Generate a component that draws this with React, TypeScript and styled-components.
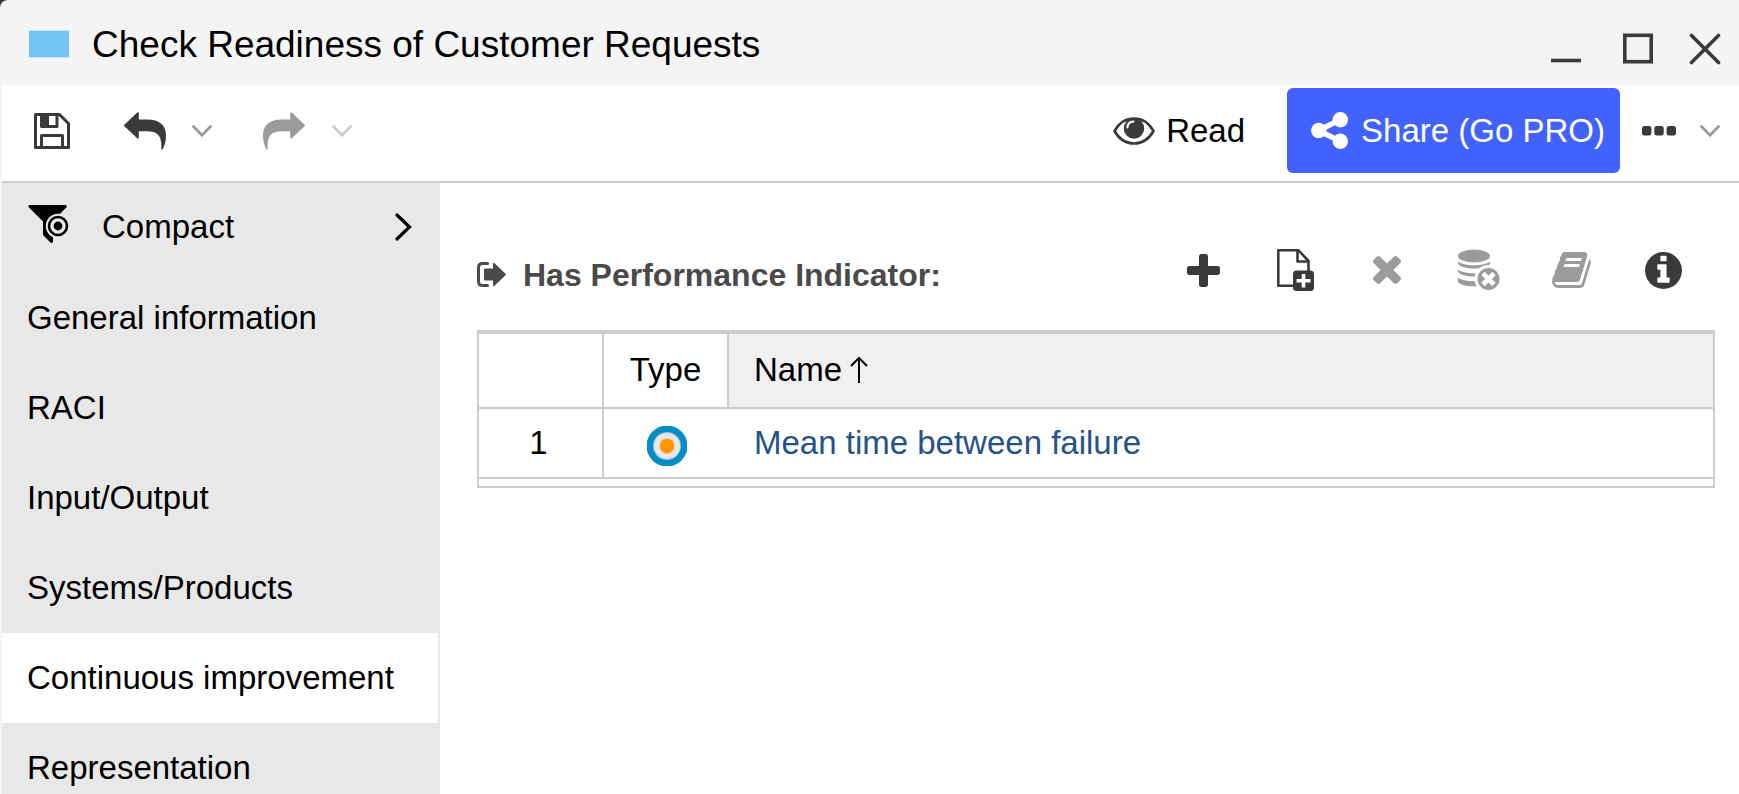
import React from 'react';
import styled, { createGlobalStyle } from 'styled-components';

const GlobalStyle = createGlobalStyle`
  *, *::before, *::after { box-sizing: border-box; }
  html, body, #root { height: 100%; }
  body {
    margin: 0;
    overflow: hidden;
    background: #3a3a3a;
    color: #000;
    font-family: "Liberation Sans", Arial, Helvetica, sans-serif;
    font-size: 33px;
    line-height: 40px;
  }
  button {
    margin: 0;
    padding: 0;
    border: 0;
    background: none;
    color: inherit;
    font: inherit;
    cursor: pointer;
  }
  button:disabled { cursor: default; }
  svg { display: block; flex: none; }
`;

const Window = styled.div`
  display: flex;
  flex-direction: column;
  min-height: 100%;
  padding-left: 2px;
  background: #f4f4f4;
  border-top-left-radius: 8px;
`;

const TitleBar = styled.header`
  display: flex;
  align-items: center;
  height: 85px;
  padding: 2px 18px 0 27px;
`;

const Title = styled.h1`
  flex: 1;
  margin: 0 0 0 23px;
  padding-top: 2px;
  font-size: 37px;
  line-height: 44px;
  font-weight: 400;
  white-space: nowrap;
`;

const WindowControls = styled.div`
  display: flex;
  gap: 36px;
  padding-top: 10px;
  color: #3a3a3a;
`;

const Toolbar = styled.div`
  display: flex;
  align-items: center;
  height: 98px;
  padding: 0 19px 5px 32px;
  background: #fff;
  border-bottom: 2px solid #ccc;
`;

const ToolButton = styled.button<{ $tone?: string; $gap?: number }>`
  display: flex;
  align-items: center;
  margin-left: ${({ $gap = 0 }) => $gap}px;
  color: ${({ $tone = '#3a3a3a' }) => $tone};
`;

const Spacer = styled.div`
  flex: 1;
`;

const ReadButton = styled.button`
  display: flex;
  align-items: center;
  gap: 11px;
  margin-right: 42px;
`;

const ShareButton = styled.button`
  display: flex;
  align-items: center;
  gap: 13px;
  height: 85px;
  padding: 0 15px 0 24px;
  border-radius: 6px;
  background: #4262ff;
  color: #fff;
  white-space: nowrap;
`;

const Body = styled.div`
  display: flex;
  flex: 1;
  min-height: 0;
`;

const Sidebar = styled.nav`
  width: 438px;
  flex: none;
  background: #e8e8e8;
`;

const SidebarItem = styled.button<{ $active?: boolean }>`
  display: flex;
  align-items: center;
  width: 100%;
  height: 90px;
  padding: 0 26px 0 25px;
  border-right: 2px solid #e8e8e8;
  background: ${({ $active }) => ($active ? '#fff' : 'transparent')};
  text-align: left;
  white-space: nowrap;
`;

const ViewItem = styled(SidebarItem)`
  padding: 0 26px 2px;
  svg:first-child { margin-bottom: 6px; }
`;

const CompactLabel = styled.span`
  flex: 1;
  margin-left: 33px;
`;

const Content = styled.main`
  flex: 1;
  min-width: 0;
  padding: 57px 24px 0 37px;
  background: #fff;
`;

const SectionHeader = styled.div`
  display: flex;
  align-items: center;
  height: 60px;
  margin-bottom: 30px;
`;

const SectionTitle = styled.h2`
  display: flex;
  flex: 1;
  align-items: center;
  gap: 16px;
  margin: 0;
  padding-top: 9px;
  color: #4a4a4a;
  font-size: 32px;
  line-height: 40px;
  font-weight: 700;
  white-space: nowrap;
`;

const Actions = styled.div`
  display: flex;
  padding-right: 6px;
`;

const ActionButton = styled.button`
  display: flex;
  align-items: center;
  justify-content: center;
  width: 92px;
  height: 60px;
  color: #3a3a3a;
  &:disabled { color: #9b9b9b; }
`;

const Grid = styled.div`
  padding-bottom: 7px;
  border: 2px solid #ccc;
  border-top-width: 4px;
`;

const Table = styled.table`
  width: 100%;
  border-collapse: separate;
  border-spacing: 0;
  table-layout: fixed;
`;

const HeadCell = styled.th<{ $sorted?: boolean; $width?: number }>`
  ${({ $width }) => $width && `width: ${$width}px;`}
  height: 75px;
  padding: ${({ $sorted }) => ($sorted ? '0 25px 2px' : '0 0 2px')};
  border-bottom: 2px solid #ccc;
  border-right: ${({ $sorted }) => ($sorted ? '0' : '2px solid #ccc')};
  background: ${({ $sorted }) => ($sorted ? '#f0f0f0' : '#fff')};
  font-weight: 400;
  text-align: ${({ $sorted }) => ($sorted ? 'left' : 'center')};
`;

const SortButton = styled.button`
  display: flex;
  align-items: center;
  gap: 8px;
`;

const Cell = styled.td`
  height: 70px;
  padding: 0 25px;
  border-bottom: 2px solid #ccc;
`;

const NumberCell = styled(Cell)`
  padding: 0 4px 0 0;
  border-right: 2px solid #ccc;
  text-align: center;
`;

const TypeCell = styled(Cell)`
  padding: 6px 0 0;
  svg { margin: 0 auto; }
`;

const NameLink = styled.a`
  color: #255288;
  text-decoration: none;
`;

const FolderIcon = () => (
  <svg width="40" height="28" viewBox="0 0 40 28" aria-hidden="true">
    <rect width="40" height="28" fill="#c3e2f8" />
    <rect y="1" width="40" height="26" fill="#74c3f5" />
  </svg>
);

const SaveIcon = () => (
  <svg width="36" height="36" viewBox="0 0 36 36" fill="none" stroke="currentColor" strokeWidth="3" strokeLinejoin="round" aria-hidden="true">
    <path d="M1.5 1.5H25.5L34.5 10.5V34.5H1.5Z" />
    <path d="M7.5 1.5V13.5H23V1.5" />
    <path d="M8 2H15V13H8Z" fill="currentColor" stroke="none" />
    <path d="M7.5 34V22.5H28.5V34" />
  </svg>
);

const CurvedArrow = ({ flip }: { flip?: boolean }) => (
  <svg width="42" height="38" viewBox="0 0 42 38" fill="currentColor" aria-hidden="true">
    <path
      transform={flip ? 'translate(42 0) scale(-1 1)' : undefined}
      d="M.4 12.8 13.2.4Q14.8-.4 14.8 1.3V7.6H23C36 7.6 42 13.5 42 23.5C42 29 40.8 33.5 38.5 37.5H37.2C38.500 24.5 34 19.3 23 19.3H14.8V25.5Q14.8 27.5 13.2 26.3L.4 14.3Q-.3 13.5.4 12.8Z"
    />
  </svg>
);

const Caret = () => (
  <svg width="20" height="12" viewBox="0 0 20 12" fill="none" stroke="currentColor" strokeWidth="2.8" strokeLinecap="round" aria-hidden="true">
    <path d="M1.5 1.5 10 10.2 18.5 1.5" />
  </svg>
);

const EyeIcon = () => (
  <svg width="42" height="28" viewBox="0 0 42 28" aria-hidden="true">
    <path d="M1.5 14C6 6 13 1.5 21 1.5S36 6 40.5 14C36 22 29 26.500 21 26.5S6 22 1.5 14Z" fill="none" stroke="#3a3a3a" strokeWidth="2.6" strokeLinejoin="round" />
    <circle cx="21" cy="11.5" r="10.2" fill="#3a3a3a" />
    <path d="M14.500 10.5C14.500 7 16.500 4.700 20.500 4.500" fill="none" stroke="#fff" strokeWidth="2" strokeLinecap="round" />
  </svg>
);

const ShareIcon = () => (
  <svg width="37" height="37" viewBox="128 128 1536 1536" fill="currentColor" aria-hidden="true">
    <path d="M1344 1024q133 0 226.5 93.5t93.5 226.5-93.5 226.5-226.5 93.5-226.5-93.5-93.5-226.5q0-12 2-34l-360-180q-92 86-218 86-133 0-226.5-93.5t-93.5-226.5 93.5-226.5 226.5-93.5q126 0 218 86l360-180q-2-22-2-34 0-133 93.5-226.5t226.5-93.5 226.5 93.5 93.5 226.5-93.5 226.5-226.5 93.5q-126 0-218-86l-360 180q2 22 2 34t-2 34l360 180q92-86 218-86z" />
  </svg>
);

const DotsIcon = () => (
  <svg width="34" height="10" viewBox="0 0 34 10" fill="currentColor" aria-hidden="true">
    <rect width="9.400" height="9.400" rx="2.500" />
    <rect x="12.300" width="9.400" height="9.400" rx="2.500" />
    <rect x="24.600" width="9.400" height="9.400" rx="2.500" />
  </svg>
);

const FunnelIcon = () => (
  <svg width="41" height="40" viewBox="0 0 41 40" aria-hidden="true">
    <path d="M1.5 1H37.5Q39.5 2 38.5 3.2L25 17V37.5Q24.5 40 22.5 38.5L15.5 31.5Q15 31 15 30V17.5L.8 3.3Q-.3 1.8 1.5 1Z" />
    <circle cx="30" cy="22" r="12.2" fill="#e8e8e8" />
    <circle cx="30" cy="22" r="9" fill="none" stroke="#000" strokeWidth="2.6" />
    <circle cx="30" cy="22" r="4.4" />
  </svg>
);

const ChevronRight = () => (
  <svg width="17" height="28" viewBox="0 0 17 28" fill="none" stroke="currentColor" strokeWidth="3.2" strokeLinecap="round" aria-hidden="true">
    <path d="M2 2 14.5 14 2 26" />
  </svg>
);

const LinkOutIcon = () => (
  <svg width="30" height="26" viewBox="0 0 30 26" fill="currentColor" aria-hidden="true">
    <path d="M10.500 1.500H5.500Q1.500 1.500 1.500 5.500V19.500Q1.500 23.500 5.500 23.500H10.500" fill="none" stroke="currentColor" strokeWidth="3" strokeLinecap="round" />
    <path d="M8 6.500H16V2Q16 .2 17.500 1.200L28.500 11.700Q29.300 12.500 28.500 13.300L17.500 23.800Q16 24.800 16 23V18.500H8Q7 18.500 7 17.500V7.500Q7 6.500 8 6.500Z" />
  </svg>
);

const PlusIcon = () => (
  <svg width="33" height="33" viewBox="192 128 1408 1408" fill="currentColor" aria-hidden="true">
    <path d="M1600 736v192q0 40-28 68t-68 28h-416v416q0 40-28 68t-68 28h-192q-40 0-68-28t-28-68v-416h-416q-40 0-68-28t-28-68v-192q0-40 28-68t68-28h416v-416q0-40 28-68t68-28h192q40 0 68 28t28 68v416h416q40 0 68 28t28 68z" />
  </svg>
);

const FileAddIcon = () => (
  <svg width="37" height="42" viewBox="0 0 37 42" aria-hidden="true">
    <g fill="none" stroke="currentColor" strokeWidth="2.6" strokeLinejoin="round">
      <path d="M31.500 22V12L21.500 1.300H1.300V36.800H17" />
      <path d="M20.500 1.200V12.500H31.500" />
    </g>
    <rect x="16" y="21.500" width="21" height="20.500" rx="3.500" fill="currentColor" />
    <path d="M26.500 25V38.500M19.500 31.700H33.500" stroke="#fff" strokeWidth="3.6" />
  </svg>
);

const TimesIcon = () => (
  <svg width="28" height="28" viewBox="302 302 1188 1188" fill="currentColor" aria-hidden="true">
    <path d="M1490 1322q0 40-28 68l-136 136q-28 28-68 28t-68-28l-294-294-294 294q-28 28-68 28t-68-28l-136-136q-28-28-28-68t28-68l294-294-294-294q-28-28-28-68t28-68l136-136q28-28 68-28t68 28l294 294 294-294q28-28 68-28t68 28l136 136q28 28 28 68t-28 68l-294 294 294 294q28 28 28 68z" transform="translate(0 -64)" />
  </svg>
);

const DatabaseRemoveIcon = () => (
  <svg width="42" height="42" viewBox="0 0 42 42" aria-hidden="true">
    <g fill="currentColor">
      <ellipse cx="16" cy="7" rx="16" ry="6.500" />
      <path d="M0 12.500C6 17.500 26 17.500 32 12.500V15C28 21 4 21 0 15Z" />
      <path d="M0 20.500C6 25.500 26 25.500 32 20.500V23C28 29 4 29 0 23Z" />
      <path d="M0 28.500C6 33.500 26 33.500 32 28.500V31C28 39 4 39 0 33Z" />
    </g>
    <circle cx="30.500" cy="30" r="14" fill="#fff" />
    <circle cx="30.500" cy="30" r="11" fill="currentColor" />
    <path d="M25 24.500 36 35.500M36 24.500 25 35.500" stroke="#fff" strokeWidth="4.600" />
  </svg>
);

const BookIcon = () => (
  <svg width="39" height="36" viewBox="60 128 1670 1536" fill="currentColor" aria-hidden="true">
    <path d="M1703 478q40 57 18 129l-275 906q-19 64-76.5 107.5t-122.5 43.5h-923q-77 0-148.5-53.5t-99.5-131.5q-24-67-2-127 0-4 3-27t4-37q1-8-3-21.5t-3-19.5q2-11 8-21t16.5-23.5 16.5-23.5q23-38 45-91.5t30-91.5q3-10 .5-30t-.5-28q3-11 17-28t17-23q21-36 42-92t25-90q1-9-2.5-32t.5-28q4-13 22-30.5t22-22.5q19-26 42.5-84.5t27.5-96.5q1-8-3-25.5t-2-26.5q2-8 9-18t18-23 17-21q8-12 16.5-30.5t15-35 16-36 19.5-32 26.5-23.5 36-11.5 47.5 5.5l-1 3q38-9 51-9h761q74 0 114 56t18 130l-274 906q-36 119-71.5 153.5t-128.5 34.5h-869q-27 0-38 15-11 16-1 43 24 70 144 70h923q29 0 56-15.5t35-41.5l300-987q7-22 5-57 38 15 59 43zm-1064 2q-4 13 2 22.5t20 9.5h608q13 0 25.5-9.5t16.5-22.5l21-64q4-13-2-22.5t-20-9.5h-608q-13 0-25.5 9.5t-16.5 22.5zm-83 256q-4 13 2 22.5t20 9.5h608q13 0 25.5-9.5t16.5-22.5l21-64q4-13-2-22.5t-20-9.5h-608q-13 0-25.5 9.5t-16.5 22.5z" />
  </svg>
);

const InfoIcon = () => (
  <svg width="37" height="37" viewBox="128 128 1536 1536" fill="currentColor" aria-hidden="true">
    <path d="M1152 1376v-160q0-14-9-23t-23-9h-96v-512q0-14-9-23t-23-9h-320q-14 0-23 9t-9 23v160q0 14 9 23t23 9h96v320h-96q-14 0-23 9t-9 23v160q0 14 9 23t23 9h448q14 0 23-9t9-23zm-128-896v-160q0-14-9-23t-23-9h-192q-14 0-23 9t-9 23v160q0 14 9 23t23 9h192q14 0 23-9t9-23zm640 416q0 209-103 385.5t-279.5 279.5-385.5 103-385.5-103-279.5-279.5-103-385.5 103-385.5 279.5-279.5 385.5-103 385.5 103 279.5 279.5 103 385.5z" />
  </svg>
);

const SortArrow = () => (
  <svg width="18" height="28" viewBox="0 0 18 28" fill="none" stroke="#000" strokeWidth="2" aria-hidden="true">
    <path d="M9 27V2M1 10 9 2 17 10" />
  </svg>
);

const IndicatorIcon = () => (
  <svg width="40" height="40" viewBox="0 0 40 40" role="img" aria-label="Indicator">
    <circle cx="20" cy="20" r="20.5" fill="#078dc5" />
    <circle cx="20" cy="20" r="14" fill="#8fc4df" />
    <circle cx="20" cy="20" r="13" fill="#e6e8ec" />
    <circle cx="20" cy="20" r="8" fill="#fbc987" />
    <circle cx="20" cy="20" r="7" fill="#ff9500" />
  </svg>
);

const MinimizeIcon = () => (
  <svg width="36" height="32" viewBox="0 0 36 32" aria-hidden="true">
    <path d="M0 27.5H30" stroke="currentColor" strokeWidth="3.6" />
  </svg>
);

const MaximizeIcon = () => (
  <svg width="30" height="32" viewBox="0 0 30 32" aria-hidden="true">
    <rect x="1.8" y="2.3" width="26.4" height="26.4" fill="none" stroke="currentColor" strokeWidth="3.6" />
  </svg>
);

const CloseIcon = () => (
  <svg width="32" height="32" viewBox="0 0 32 32" aria-hidden="true">
    <path d="M2.500 2.500 29.500 29.500M29.500 2.500 2.500 29.500" stroke="currentColor" strokeWidth="3.6" strokeLinecap="round" />
  </svg>
);

const sections = [
  'General information',
  'RACI',
  'Input/Output',
  'Systems/Products',
  'Continuous improvement',
  'Representation',
];

const actions = [
  { label: 'Add', icon: <PlusIcon /> },
  { label: 'New object', icon: <FileAddIcon /> },
  { label: 'Remove', icon: <TimesIcon />, disabled: true },
  { label: 'Delete from database', icon: <DatabaseRemoveIcon />, disabled: true },
  { label: 'Open dialog', icon: <BookIcon />, disabled: true },
  { label: 'Information', icon: <InfoIcon /> },
];

const indicators = [{ name: 'Mean time between failure' }];

export default function App() {
  const [active, setActive] = React.useState('Continuous improvement');

  return (
    <>
      <GlobalStyle />
      <Window>
        <TitleBar>
          <FolderIcon />
          <Title>Check Readiness of Customer Requests</Title>
          <WindowControls>
            <button aria-label="Minimize"><MinimizeIcon /></button>
            <button aria-label="Maximize"><MaximizeIcon /></button>
            <button aria-label="Close"><CloseIcon /></button>
          </WindowControls>
        </TitleBar>

        <Toolbar>
          <ToolButton aria-label="Save"><SaveIcon /></ToolButton>
          <ToolButton aria-label="Undo" $gap={54}><CurvedArrow /></ToolButton>
          <ToolButton aria-label="Undo history" $gap={26} $tone="#9b9b9b"><Caret /></ToolButton>
          <ToolButton aria-label="Redo" $gap={51} $tone="#9b9b9b" disabled><CurvedArrow flip /></ToolButton>
          <ToolButton aria-label="Redo history" $gap={27} $tone="#cdcdcd" disabled><Caret /></ToolButton>
          <Spacer />
          <ReadButton><EyeIcon />Read</ReadButton>
          <ShareButton><ShareIcon />Share (Go PRO)</ShareButton>
          <ToolButton aria-label="More" $gap={22}><DotsIcon /></ToolButton>
          <ToolButton aria-label="More options" $gap={24} $tone="#9b9b9b"><Caret /></ToolButton>
        </Toolbar>

        <Body>
          <Sidebar>
            <ViewItem>
              <FunnelIcon />
              <CompactLabel>Compact</CompactLabel>
              <ChevronRight />
            </ViewItem>
            {sections.map((name) => (
              <SidebarItem key={name} $active={name === active} onClick={() => setActive(name)}>
                {name}
              </SidebarItem>
            ))}
          </Sidebar>

          <Content>
            <SectionHeader>
              <SectionTitle><LinkOutIcon />Has Performance Indicator:</SectionTitle>
              <Actions>
                {actions.map(({ label, icon, disabled }) => (
                  <ActionButton key={label} aria-label={label} disabled={disabled}>{icon}</ActionButton>
                ))}
              </Actions>
            </SectionHeader>

            <Grid>
              <Table>
                <thead>
                  <tr>
                    <HeadCell $width={125} />
                    <HeadCell $width={125}>Type</HeadCell>
                    <HeadCell $sorted aria-sort="ascending">
                      <SortButton>Name<SortArrow /></SortButton>
                    </HeadCell>
                  </tr>
                </thead>
                <tbody>
                  {indicators.map(({ name }, index) => (
                    <tr key={name}>
                      <NumberCell>{index + 1}</NumberCell>
                      <TypeCell><IndicatorIcon /></TypeCell>
                      <Cell><NameLink href="#">{name}</NameLink></Cell>
                    </tr>
                  ))}
                </tbody>
              </Table>
            </Grid>
          </Content>
        </Body>
      </Window>
    </>
  );
}
